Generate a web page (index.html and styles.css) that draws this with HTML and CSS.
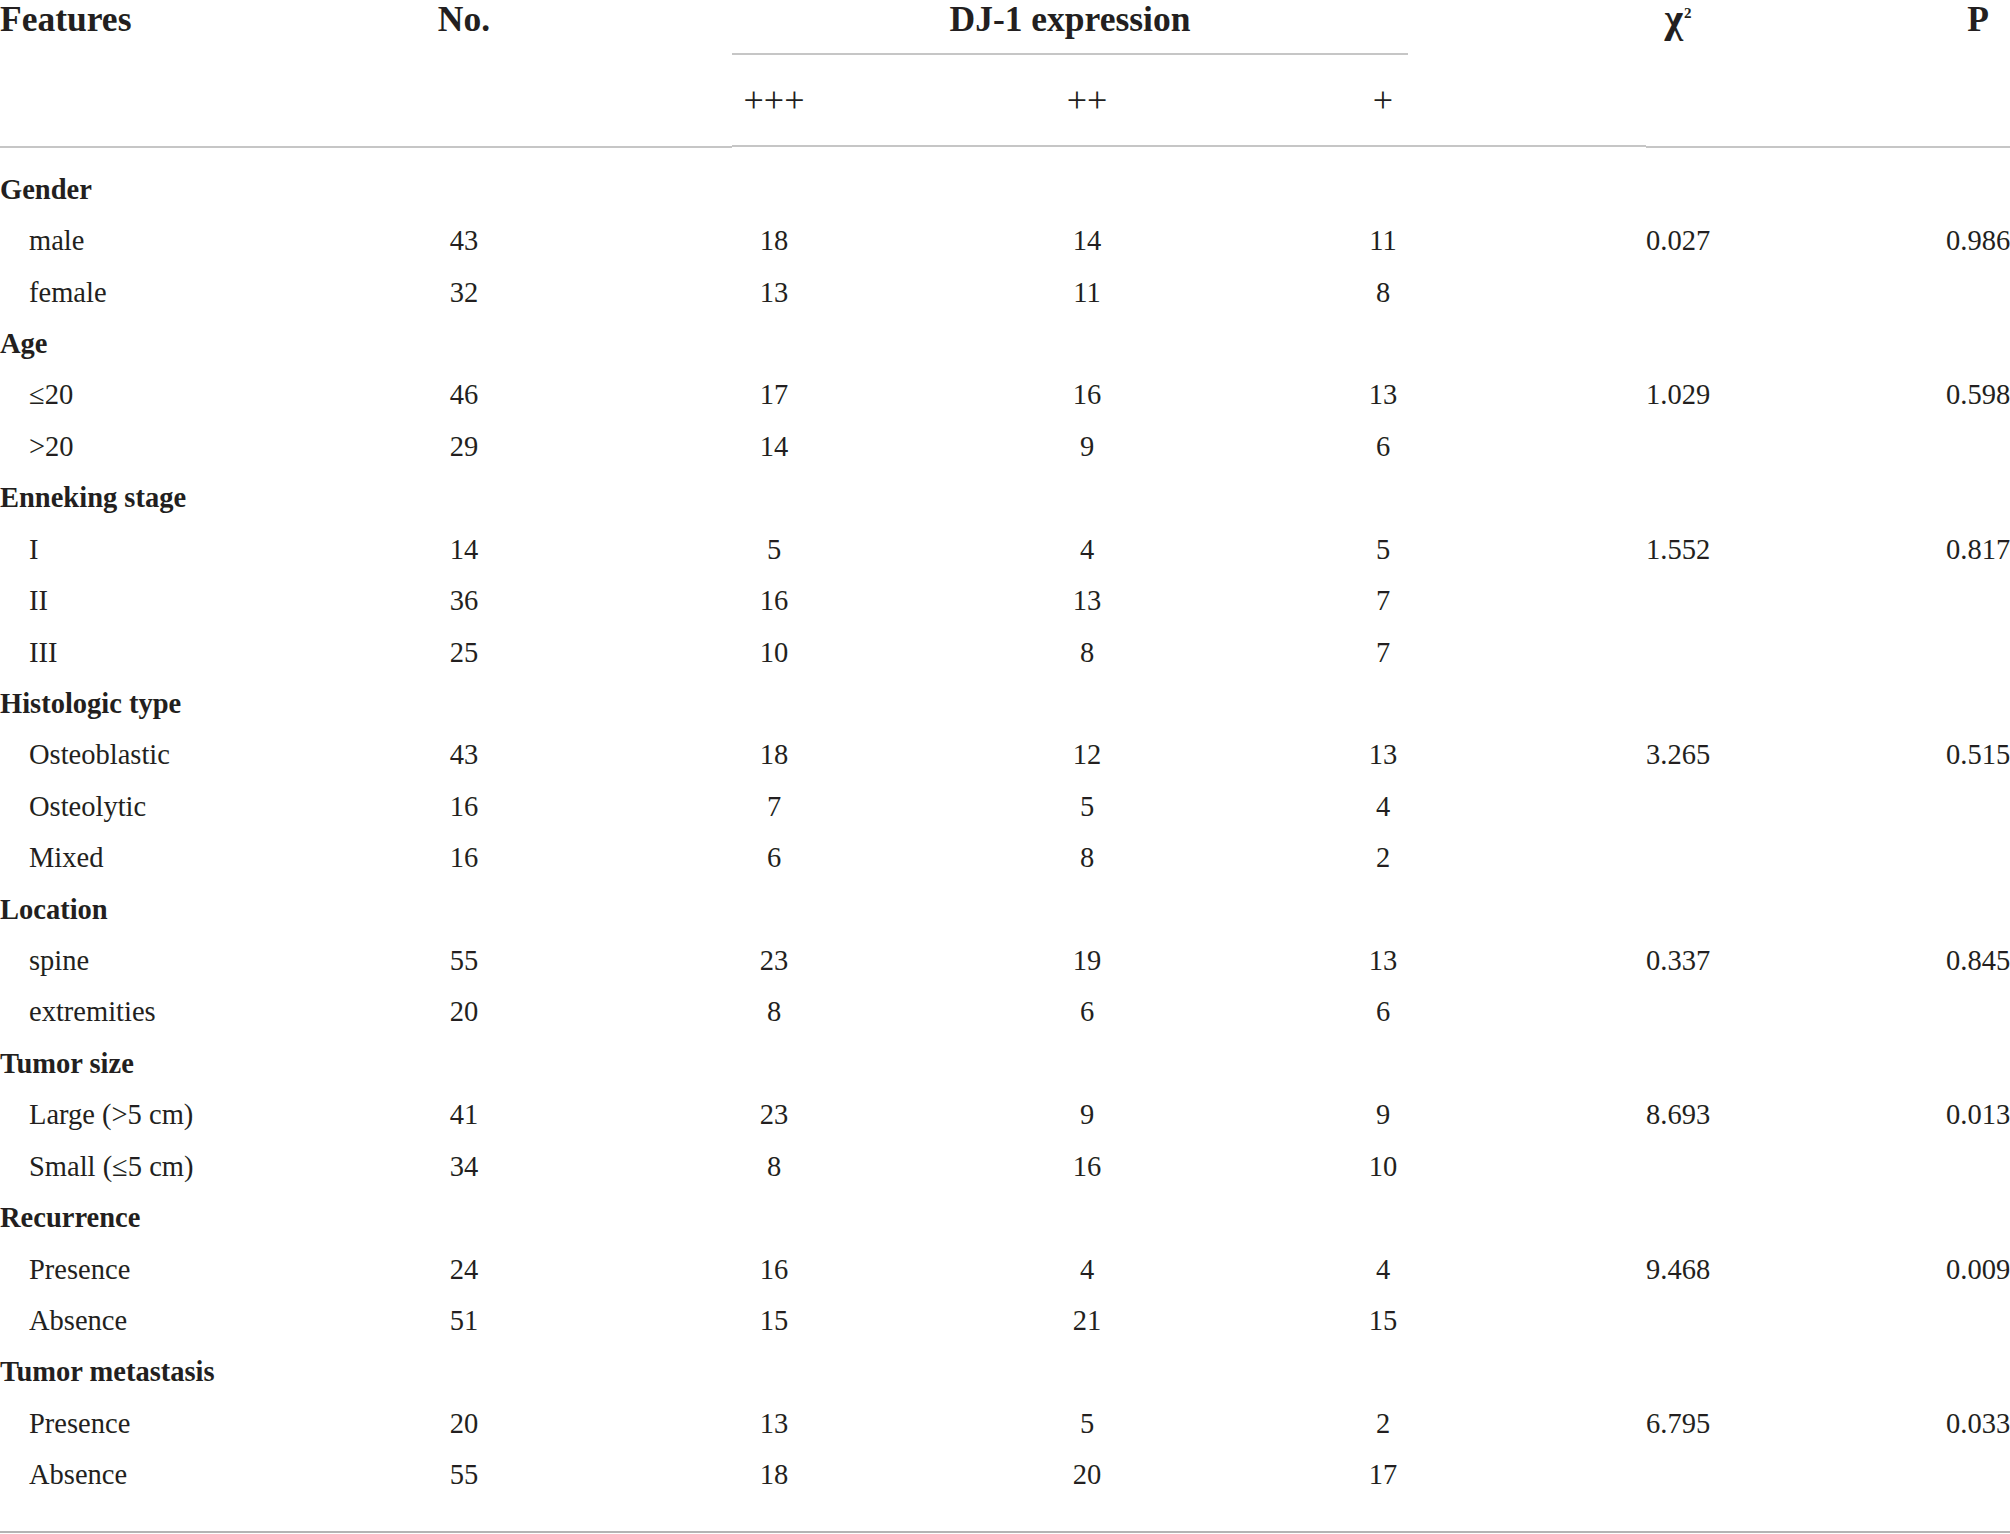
FILE: index.html
```html
<!DOCTYPE html>
<html lang="en">
<head>
<meta charset="utf-8">
<title>DJ-1 expression table</title>
<link rel="stylesheet" href="styles.css">
</head>
<body>
<div class="table">
  <div class="thead">
    <div class="row head-top">
      <div class="th c-feat">Features</div>
      <div class="th c-no">No.</div>
      <div class="th c-dj">DJ-1 expression</div>
      <div class="th c-chi"><span class="chi">χ</span><sup>2</sup></div>
      <div class="th c-p">P</div>
    </div>
    <div class="row head-sub">
      <div class="sub c-p3">+++</div>
      <div class="sub c-p2">++</div>
      <div class="sub c-p1">+</div>
    </div>
    <div class="rule">
      <div class="seg seg-left"></div>
      <div class="seg seg-mid"></div>
      <div class="seg seg-right"></div>
    </div>
  </div>
  <div class="tbody">
    <div class="row body-row"><div class="cat c-feat">Gender</div></div>
    <div class="row body-row"><div class="item c-feat">male</div><div class="c-no">43</div><div class="c-p3">18</div><div class="c-p2">14</div><div class="c-p1">11</div><div class="c-chi">0.027</div><div class="c-p">0.986</div></div>
    <div class="row body-row"><div class="item c-feat">female</div><div class="c-no">32</div><div class="c-p3">13</div><div class="c-p2">11</div><div class="c-p1">8</div></div>
    <div class="row body-row"><div class="cat c-feat">Age</div></div>
    <div class="row body-row"><div class="item c-feat">≤20</div><div class="c-no">46</div><div class="c-p3">17</div><div class="c-p2">16</div><div class="c-p1">13</div><div class="c-chi">1.029</div><div class="c-p">0.598</div></div>
    <div class="row body-row"><div class="item c-feat">&gt;20</div><div class="c-no">29</div><div class="c-p3">14</div><div class="c-p2">9</div><div class="c-p1">6</div></div>
    <div class="row body-row"><div class="cat c-feat">Enneking stage</div></div>
    <div class="row body-row"><div class="item c-feat">I</div><div class="c-no">14</div><div class="c-p3">5</div><div class="c-p2">4</div><div class="c-p1">5</div><div class="c-chi">1.552</div><div class="c-p">0.817</div></div>
    <div class="row body-row"><div class="item c-feat">II</div><div class="c-no">36</div><div class="c-p3">16</div><div class="c-p2">13</div><div class="c-p1">7</div></div>
    <div class="row body-row"><div class="item c-feat">III</div><div class="c-no">25</div><div class="c-p3">10</div><div class="c-p2">8</div><div class="c-p1">7</div></div>
    <div class="row body-row"><div class="cat c-feat">Histologic type</div></div>
    <div class="row body-row"><div class="item c-feat">Osteoblastic</div><div class="c-no">43</div><div class="c-p3">18</div><div class="c-p2">12</div><div class="c-p1">13</div><div class="c-chi">3.265</div><div class="c-p">0.515</div></div>
    <div class="row body-row"><div class="item c-feat">Osteolytic</div><div class="c-no">16</div><div class="c-p3">7</div><div class="c-p2">5</div><div class="c-p1">4</div></div>
    <div class="row body-row"><div class="item c-feat">Mixed</div><div class="c-no">16</div><div class="c-p3">6</div><div class="c-p2">8</div><div class="c-p1">2</div></div>
    <div class="row body-row"><div class="cat c-feat">Location</div></div>
    <div class="row body-row"><div class="item c-feat">spine</div><div class="c-no">55</div><div class="c-p3">23</div><div class="c-p2">19</div><div class="c-p1">13</div><div class="c-chi">0.337</div><div class="c-p">0.845</div></div>
    <div class="row body-row"><div class="item c-feat">extremities</div><div class="c-no">20</div><div class="c-p3">8</div><div class="c-p2">6</div><div class="c-p1">6</div></div>
    <div class="row body-row"><div class="cat c-feat">Tumor size</div></div>
    <div class="row body-row"><div class="item c-feat">Large (&gt;5 cm)</div><div class="c-no">41</div><div class="c-p3">23</div><div class="c-p2">9</div><div class="c-p1">9</div><div class="c-chi">8.693</div><div class="c-p">0.013</div></div>
    <div class="row body-row"><div class="item c-feat">Small (≤5 cm)</div><div class="c-no">34</div><div class="c-p3">8</div><div class="c-p2">16</div><div class="c-p1">10</div></div>
    <div class="row body-row"><div class="cat c-feat">Recurrence</div></div>
    <div class="row body-row"><div class="item c-feat">Presence</div><div class="c-no">24</div><div class="c-p3">16</div><div class="c-p2">4</div><div class="c-p1">4</div><div class="c-chi">9.468</div><div class="c-p">0.009</div></div>
    <div class="row body-row"><div class="item c-feat">Absence</div><div class="c-no">51</div><div class="c-p3">15</div><div class="c-p2">21</div><div class="c-p1">15</div></div>
    <div class="row body-row"><div class="cat c-feat">Tumor metastasis</div></div>
    <div class="row body-row"><div class="item c-feat">Presence</div><div class="c-no">20</div><div class="c-p3">13</div><div class="c-p2">5</div><div class="c-p1">2</div><div class="c-chi">6.795</div><div class="c-p">0.033</div></div>
    <div class="row body-row"><div class="item c-feat">Absence</div><div class="c-no">55</div><div class="c-p3">18</div><div class="c-p2">20</div><div class="c-p1">17</div></div>
  </div>
</div>
</body>
</html>
```
FILE: styles.css
```css
html, body {
  margin: 0;
  padding: 0;
  background: #ffffff;
}

body {
  font-family: "Liberation Serif", "Times New Roman", serif;
  color: #231f20;
  width: 2010px;
  overflow: hidden;
}

.table {
  width: 2010px;
  border-bottom: 2px solid #b4b4b4;
  padding-bottom: 30px;
}

.row {
  display: grid;
  grid-template-columns: 400px 128px 204px 84px 542px 50px 238px 64px 236px 64px;
  white-space: nowrap;
}

.row > div {
  text-align: center;
}

.c-feat { grid-column: 1; text-align: left !important; }
.c-no { grid-column: 2; }
.c-p3 { grid-column: 4; }
.c-p2 { grid-column: 5; }
.c-p1 { grid-column: 6; }
.c-chi { grid-column: 8; }
.c-p { grid-column: 10; }
.c-dj { grid-column: 4 / 7; }

/* header */
.head-top {
  height: 55px;
}

.th {
  font-weight: bold;
  font-size: 35.5px;
  line-height: 38px;
}

.c-dj {
  padding-bottom: 15px;
  border-bottom: 2px solid #c6c6c6;
}

.chi {
  font-size: 40px;
  line-height: 38px;
}

.th sup {
  font-size: 15px;
  line-height: 0;
  vertical-align: 0;
  position: relative;
  top: -14px;
  margin-left: 1px;
}

.head-sub {
  height: 90px;
  align-items: center;
  font-size: 36px;
  line-height: 40px;
}

.rule {
  display: flex;
  height: 3px;
}

.seg {
  height: 2px;
  background: #c6c6c6;
}

.seg-left {
  width: 732px;
  margin-top: 1px;
}

.seg-mid {
  width: 914px;
}

.seg-right {
  width: 364px;
  margin-top: 1px;
}

/* body */
.tbody {
  padding-top: 16px;
}

.body-row {
  height: 51.43px;
  align-items: center;
  font-size: 28.5px;
  line-height: 34px;
}

.cat {
  font-weight: bold;
}

.item {
  padding-left: 29px;
}
```
